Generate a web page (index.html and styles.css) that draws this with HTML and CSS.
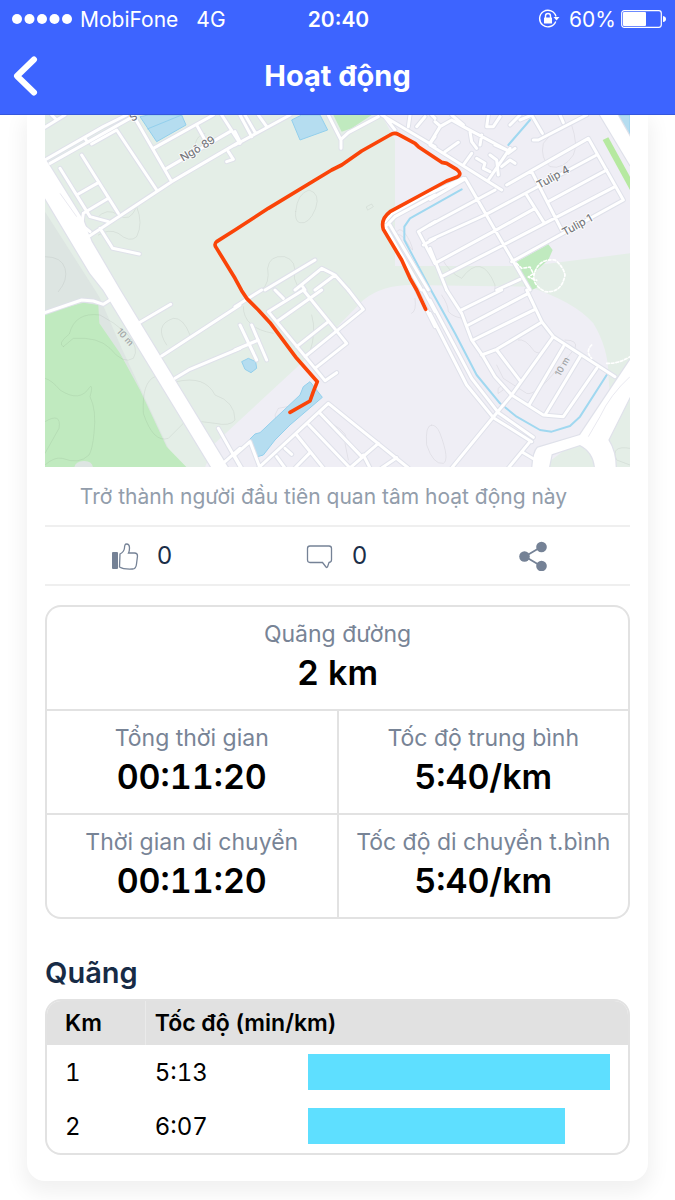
FILE: index.html
```html
<!DOCTYPE html>
<html lang="vi">
<head>
<meta charset="utf-8">
<meta name="viewport" content="width=device-width, initial-scale=1">
<title>Hoạt động</title>
<link rel="stylesheet" href="styles.css">
</head>
<body>
<header class="header">
  <div class="status">
    <div class="status-side">
      <svg class="signal" viewBox="0 0 62 12" aria-hidden="true"><circle cx="6" cy="6" r="5"/><circle cx="18.500" cy="6" r="5"/><circle cx="31" cy="6" r="5"/><circle cx="43.500" cy="6" r="5"/><circle cx="56" cy="6" r="5"/></svg>
      <span>MobiFone</span>
      <span class="network">4G</span>
    </div>
    <time class="clock">20:40</time>
    <div class="status-side status-right">
      <svg class="lock" viewBox="0 0 22 20" aria-hidden="true">
        <path d="M17.700 12.500A8.300 8.300 0 1 1 18 7.500" fill="none" stroke="#fff" stroke-width="1.400"/>
        <path d="M15.500 8h6l-3 3.500z"/><rect x="6" y="8.500" width="8" height="6" rx=".5"/>
        <path d="M7.500 9V7a2.500 2.500 0 0 1 5 0v2" fill="none" stroke="#fff" stroke-width="1.400"/>
      </svg>
      <span>60%</span>
      <svg class="battery" viewBox="0 0 45 18" aria-hidden="true"><rect x=".7" y=".7" width="39.600" height="16.600" rx="2.500" fill="none" stroke="#fff" stroke-width="1.200"/><rect x="2" y="2" width="23" height="14" rx="1"/><path d="M42 6q3 .5 3 3t-3 3z"/></svg>
    </div>
  </div>
  <div class="nav">
    <button class="back" type="button" aria-label="Quay lại"><svg viewBox="0 0 26 40" aria-hidden="true"><path d="M22 3.500 5 20l17 16.500"/></svg></button>
    <h1 class="title">Hoạt động</h1>
  </div>
</header>
<main class="page">
<article class="card">
  <svg class="map" viewBox="0 0 1755 1057" role="img" aria-label="Bản đồ">
    <defs>
      <g id="roads">
        <path transform="translate(-15 -15)" d="M15 52 75 15M35 15l12 12M15 150 190 50 260 15M30 160 275 22M135 85l8 12M155 102 230 60 350 240M125 135 235 310M60 175 150 320 205 335M110 255 175 218M130 310 205 265M145 380 395 215 600 95M285 25 395 215M340 115 520 15M380 175 575 62M470 45 495 90M545 15 600 100M565 125 580 148 560 155M180 355 218 415 298 432M130 310 125 345 150 365"/>
        <path transform="translate(570 -15)" d="M0 105 165 15M0 65 15 95M15 15 50 80M30 15 62 70M70 15 95 50M280 15 318 90V115M318 88 340 68 430 20M445 15 480 60M440 15 600 110M525 15 520 50M545 50 570 20M590 15 600 25M585 100 600 80M600 240 470 312 450 335M600 255 480 320 456 345M445 340 560 540M462 340 580 540M600 335 550 365 600 460M565 405 600 385M90 540 240 450M180 540 260 475 300 495 340 540M240 540 300 495M200 525 210 540"/>
        <path transform="translate(1155 -15)" d="M0 105 215 240M0 100 30 50 65 30 100 50 240 125M15 35 30 48M45 125 85 97M100 165 125 130M65 15 100 45M120 65 125 95 140 115M155 75 150 105M240 115 175 210M195 105 240 125M140 145 165 160 160 175 180 185M180 135 200 150 205 195M215 170 240 150 255 160M235 130 255 115M175 15 170 50 190 50 210 20M240 45 270 15M310 90 325 90 470 15M270 30 305 15 337 70M390 15 400 38M230 225 475 85 580 270 245 455M0 345 195 240M0 390 165 315 500 135M15 460 190 365 315 295M35 500 220 405 555 230M355 275 530 180M305 185 395 360M290 255 340 335M105 205 300 540M0 250 100 205M0 268 100 210M0 415 50 540M200 540 270 508"/>
        <path transform="translate(-15 525)" d="M15 68 125 30 160 33 190 43 210 30M300 97 392 43M365 198 600 45M405 265 450 238 600 175M535 415 600 530M555 515 600 475"/>
        <path transform="translate(570 525)" d="M100 65 270 272 305 248M100 65 205 0M0 50 80 0M120 0 145 25M125 95 260 0M205 0 335 160 240 235M185 170 280 95M210 200 385 58 340 0M15 105 65 210M50 105 95 210M0 180 70 150M70 534 280 340 520 534M0 495 45 455 75 534M0 500 20 534M255 370 380 500M222 405 345 534 430 460M185 435 265 534M125 500 150 534M150 475 170 493M180 534 225 488M385 495 405 534M440 534 485 503M545 0 600 110M565 0 600 65"/>
        <path transform="translate(1155 525)" d="M50 0 95 70 125 150 160 200 195 260 245 315 340 375 400 380 500 235M290 0 335 95 370 140 555 260M90 62 215 0M115 105 295 10M130 150 315 58M155 195 200 178 335 97M200 180 270 272M370 140 245 315 195 375 65 534M400 170 297 345M450 200 345 375M0 30 125 265 205 368 310 442M0 70 110 285 190 383 305 455M300 455 235 534M275 485 325 515"/>
      </g>
      <g id="highways">
        <path d="M0 130 115 315 140 380 225 525 550 1059H500L175 525 135 475 0 250Z"/>
        <path d="M1665 0H1718L1755 65V150Z"/>
        <path d="M1755 735 1605 960 1478 998Q1465 1010 1462 1057H1512L1520 1018 1605 990Q1645 1010 1650 1057H1712Q1712 1010 1690 975L1755 845Z"/>
      </g>
    </defs>
    <rect width="1755" height="1057" fill="#e4eee7"/>
    <path fill="#dde5e2" d="M0 290 150 525 165 550 230 700 300 850 375 1010 0 1057Z"/>
    <g fill="#efeef5"><path d="M1010 0 1050 75V453H1455L1755 415V0Z"/><path d="M480 1057 510 985 585 915 785 730 955 555Q1010 510 1100 510L1450 515Q1590 560 1645 625 1690 700 1690 780L1700 900 1490 1057Z"/></g>
    <path fill="#e4eee7" d="M1510 1057 1660 980 1755 850V1057Z"/>
    <path fill="#c0eabf" d="M0 595 115 563 160 570 163 625 225 715 285 825 365 995 425 1057H0ZM865 0H980L920 40 890 50ZM1415 440 1510 388 1523 405 1510 435 1475 465 1465 485 1480 515 1455 528 1440 515Z"/>
    <path fill="#dde5e2" d="M88 1057q3-18 28-19t28 19z"/>
    <path fill="#b6e9a0" d="M1673 75 1690 67 1755 185V225Z"/>
    <g class="contour">
      <path d="M0 425q50 0 60 35t-20 70M155 310q30-35 65-10t55-25q20 50 0 90-20 20-55-10-30-15-60 5M450 90q5-30 30-35"/>
      <path d="M752 290q5-55 40-65 35 10 20 55-20 50-48 43-15-5-12-33M650 525q25-20 18-65 5-40 50-35 40 10 30 65l15 35M965 275l15-8 5 8-16 10zM1050 360q15-10 35 20 30 50 10 0-30-60-45-20"/>
      <path d="M1580 30q20 60 5 90-30 45-70 35-30-25-20-70l30-35M1190 430q25 45 60 60 60-80 100 20v20"/>
      <path d="M55 695q-20-8 18-38Q90 590 165 600q40 20 80 55 40 45 20 75-30 20-70-30-35-35-110-30l-30 25M0 790q20 5 45 35 60 40 90-10 10-5 0 30 20 40 12 110-5 50-15 65-30 30-80 10-25-5-52 20M0 920q50-30 42 20L0 1015M330 785q-40 15-35 110 30 90 75 75l55-55M395 800q85-20 115 40 60 20 60 75-15 20-60 10l-40-5M365 690q-40-60 20-80 30-3 50 50"/>
      <path d="M595 575q0 65 90 80M800 600q15 50-5 110M780 865l-80 15-10 20 10 50q-20 20-25 15M860 925q60 35 40 60l10 50M1160 930q-20 0-15 60 20 60 50 55 20-10-10-90-10-25-25-25M1110 550q5 40-10 45"/>
      <path d="M1190 540q20 30 20 50 20 20 50 20l20 50M1420 675q20-5 45 30 5 10 30 10M1560 675q40 0 30 25l-25 30q-50 60-80 90-30 20-40 15l-70-45-20-40M1360 820q10-15 15 5l-15 10zM1755 1000q-60-10-40 35l40 15"/>
    </g>
    <path class="water" d="M285 5 310 0H410L423 30 335 80ZM307 42 410 0M740 15 770 0H825L848 45 765 75ZM1720 0H1755V65ZM590 740 610 730 632 740 635 760 618 773 600 763ZM795 800 832 847 735 930 690 975 655 1020 638 1025 612 975 630 957 645 953 765 840 775 815Z"/>
    <path class="canal" d="M1250 223 1095 310 1078 335V375L1155 520 1230 655 1295 780 1365 865 1415 905 1485 945 1520 950 1575 933 1605 905 1685 780M1455 15 1390 90"/>
    <use href="#roads" class="casing"/><use href="#highways" class="highway-casing"/>
    <use href="#roads" class="road"/><use href="#highways" fill="#fff"/>
    <path fill="none" stroke="#e9e9f0" stroke-width="3" d="M45 235 95 305M1755 785q-60 55-90 120l-35 60"/>
    <path class="trail" d="M1415 445l15 15 25-4 10 20-15 10 25 10M1470 470q15-40 60-35 25 20 30 45-10 55-60 50-45-25-30-60M1685 745q35 2 70-20M1640 690q-20 20 0 40"/>
    <path class="route" d="M735 892 795 858 805 830 817 800 755 730 675 623 640 585 605 550 590 527 570 490 515 400Q505 388 515 380L570 345 670 280 860 165 890 150 950 108 1035 60Q1048 51 1060 58L1110 85 1120 95 1190 142 1205 145 1235 163Q1254 178 1235 187L1205 198 1155 225 1035 290Q1006 312 1015 343L1070 435 1095 490 1115 525 1142 583"/>
    <g class="map-label">
      <text transform="translate(414 140) rotate(-31)">Ngõ 89</text>
      <text transform="translate(1483 222) rotate(-29)">Tulip 4</text>
      <text transform="translate(1559 364) rotate(-29)">Tulip 1</text>
      <text transform="translate(262 21) rotate(-31)">S</text>
      <g class="height-label"><text transform="translate(214 650) rotate(48)">10 m</text><text transform="translate(1545 785) rotate(-60)">10 m</text></g>
    </g>
  </svg>
  <p class="hint">Trở thành người đầu tiên quan tâm hoạt động này</p>
  <div class="actions">
    <button class="action like" type="button" aria-label="Thích">
      <svg viewBox="0 0 28 28" aria-hidden="true"><rect x="1" y="10" width="6" height="17" rx="1" fill="#758296"/><path d="M9 12q4-2 4.500-6 0-4 2-4 3 0 3 4 0 3-1 5h6q3 0 3 3l-1 8q-.5 5-4 5-9 .5-13-2z" fill="none" stroke="#758296" stroke-width="1.300"/></svg><span>0</span>
    </button>
    <button class="action comment" type="button" aria-label="Bình luận">
      <svg viewBox="0 0 28 28" aria-hidden="true"><path d="M4 4h19q2.500 0 2.500 2.500V18q0 2-2.500 2.500l-1.500 4.500q-.7 1-1.500 0L16.500 20.500H4Q1.500 20.500 1.500 18V6.500Q1.500 4 4 4z" fill="none" stroke="#758296" stroke-width="1.300"/></svg><span>0</span>
    </button>
    <button class="action share" type="button" aria-label="Chia sẻ">
      <svg viewBox="0 0 28 30" aria-hidden="true"><path d="M22 6 6 15.500 22 25" fill="none" stroke="#758296" stroke-width="1.800"/><g fill="#758296"><circle cx="22.500" cy="6" r="5.300"/><circle cx="5.500" cy="15.500" r="5.300"/><circle cx="22.500" cy="25" r="5.300"/></g></svg>
    </button>
  </div>
  <dl class="stats">
    <div class="stat stat-wide"><dt>Quãng đường</dt><dd>2 km</dd></div>
    <div class="stat"><dt>Tổng thời gian</dt><dd>00:11:20</dd></div>
    <div class="stat"><dt>Tốc độ trung bình</dt><dd>5:40/km</dd></div>
    <div class="stat"><dt>Thời gian di chuyển</dt><dd>00:11:20</dd></div>
    <div class="stat"><dt>Tốc độ di chuyển t.bình</dt><dd>5:40/km</dd></div>
  </dl>
  <h2 class="section-title">Quãng</h2>
  <div class="splits-frame">
  <table class="splits">
    <colgroup><col class="col-km"><col class="col-pace"><col></colgroup>
    <thead><tr><th scope="col">Km</th><th colspan="2" scope="col">Tốc độ (min/km)</th></tr></thead>
    <tbody>
      <tr><td>1</td><td>5:13</td><td class="bar-cell"><div class="bar" style="width:100%"></div></td></tr>
      <tr><td>2</td><td>6:07</td><td class="bar-cell"><div class="bar" style="width:85%"></div></td></tr>
    </tbody>
  </table>
  </div>
</article>
</main>
</body>
</html>
```
FILE: styles.css
```css
* { box-sizing: border-box; }
body { margin: 0; background: #fff; color: #000; font-family: Inter, "Noto Sans", sans-serif; }
button { border: 0; background: none; padding: 0; color: inherit; font: inherit; }

.header { background: #3d64ff; color: #fff; border-bottom: 1px solid #3557dc; }
.header svg { fill: #fff; }
.status { display: grid; grid-template-columns: 1fr auto 1fr; align-items: center; height: 38px; padding: 0 9px 0 11px; font-size: 21px; }
.status-side { display: flex; align-items: center; gap: 7px; }
.status-right { justify-content: flex-end; gap: 5px; }
.signal { width: 62px; height: 12px; }
.network { margin-left: 11px; }
.clock { font-weight: 600; }
.lock { width: 22px; height: 20px; margin-right: 4px; }
.battery { width: 45px; height: 18px; }
.nav { display: grid; grid-template-columns: 60px 1fr 60px; align-items: center; height: 76px; }
.back { width: 60px; height: 60px; padding-left: 12px; display: flex; align-items: center; }
.back svg { width: 26px; height: 40px; }
.back path { fill: none; stroke: #fff; stroke-width: 6; stroke-linecap: round; stroke-linejoin: round; }
.title { margin: 0; text-align: center; font-size: 29px; font-weight: 700; line-height: 36px; }

.page { padding: 0 27px 19px; overflow: hidden; }
.card { padding: 0 18px 26px; border-radius: 0 0 18px 18px; background: #fff; box-shadow: 0 8px 20px 4px rgba(0, 0, 0, .06); }
.map { display: block; width: 100%; }
.casing, .road, .highway-casing, .contour, .canal, .trail, .route { fill: none; stroke-linecap: round; stroke-linejoin: round; }
.casing { stroke: #dfe1ea; stroke-width: 15; }
.road { stroke: #fff; stroke-width: 9; }
.highway-casing { stroke: #dfe1ea; stroke-width: 7; }
.contour { stroke: #000; stroke-opacity: .06; stroke-width: 3; }
.water { fill: #b5ddf0; stroke: #93cfec; stroke-width: 3; }
.canal { stroke: #a0d8f0; stroke-width: 6; }
.trail { stroke: #fff; stroke-width: 5; stroke-dasharray: 8 6; }
.route { stroke: #fa4408; stroke-width: 11; }
.map-label { fill: #77797e; stroke: #fff; stroke-width: 5; paint-order: stroke; font-size: 33px; font-weight: 500; }
.height-label { fill: #a0a4a5; stroke: none; font-size: 27px; }

.hint { margin: 0; padding: 15px 28px 13px 0; text-align: center; color: #929dab; font-size: 21px; line-height: 30px; }
.actions { display: grid; grid-template-columns: 1fr 1fr 1fr; border-top: 2px solid #efefef; border-bottom: 2px solid #efefef; }
.action { display: flex; align-items: center; justify-content: center; gap: 18px; height: 57px; padding-right: 2px; color: #1b2e48; font-size: 24px; }
.action svg { width: 28px; height: 30px; }
.action.share { padding-right: 0; }
.stats { display: grid; grid-template-columns: 1fr 1fr; gap: 2px; margin: 19px 0 0; padding: 2px; border-radius: 16px; background: #e2e2e2; overflow: hidden; }
.stat { padding: 12px 4px 16px; background: #fff; text-align: center; }
.stat:first-child { border-radius: 14px 14px 0 0; }
.stat:nth-child(4) { border-radius: 0 0 0 14px; }
.stat:last-child { border-radius: 0 0 14px 0; }
.stat-wide { grid-column: 1 / -1; }
.stat dt { color: #788496; font-size: 23px; line-height: 31px; white-space: nowrap; }
.stat dd { margin: 3px 0 0; font-size: 34px; font-weight: 600; line-height: 40px; font-variant-numeric: tabular-nums; }

.section-title { margin: 36px 0 8px; color: #172b46; font-size: 29px; font-weight: 600; line-height: 36px; }
.splits-frame { border: 2px solid #e2e2e2; border-radius: 16px; overflow: hidden; }
.splits { width: 100%; border-collapse: separate; border-spacing: 0; table-layout: fixed; }
.splits th { height: 44px; padding: 0 9px; background: #e1e1e1; text-align: left; font-size: 23px; font-weight: 600; }
.splits th:first-child { border-right: 1px solid #eaeaea; }
.splits td { height: 54px; padding: 0 9px; font-size: 24px; font-variant-numeric: tabular-nums; }
.splits th:first-child, .splits td:first-child { padding-left: 18px; }
.splits .bar-cell { padding: 0 18px 0 0; }
.col-km { width: 17%; }
.col-pace { width: 28%; }
.bar { height: 36px; background: #5edfff; }
```
